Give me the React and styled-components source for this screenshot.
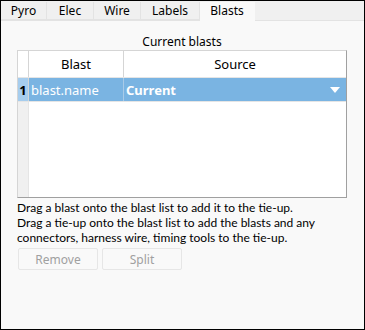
import styled, { createGlobalStyle } from "styled-components";

const GlobalStyle = createGlobalStyle`
  *, *::before, *::after {
    box-sizing: border-box;
  }
  html, body {
    margin: 0;
    padding: 0;
    background: #ffffff;
  }
  body {
    font-family: "Noto Sans", "Open Sans", sans-serif;
    font-size: 11.5px;
  }
`;

const tabs = [
  { label: "Pyro", width: 46 },
  { label: "Elec", width: 47 },
  { label: "Wire", width: 47 },
  { label: "Labels", width: 59 },
  { label: "Blasts", width: 55, active: true },
];

const helpLines = [
  "Drag a blast onto the blast list to add it to the tie-up.",
  "Drag a tie-up onto the blast list to add the blasts and any",
  "connectors, harness wire, timing tools to the tie-up.",
];

const App = () => {
  return (
    <>
      <GlobalStyle />
      <Frame>
        <TabStrip>
          {tabs.map((t) => (
            <Tab key={t.label} $active={t.active} $width={t.width}>
              {t.label}
            </Tab>
          ))}
        </TabStrip>
        <Pane>
          <Caption>Current blasts</Caption>
          <Grid>
            <HeaderRow>
              <Corner />
              <HeadCell $width={95}>Blast</HeadCell>
              <HeadCell $grow>Source</HeadCell>
            </HeaderRow>
            <Row>
              <RowNumber>1</RowNumber>
              <Cell $width={95}>blast.name</Cell>
              <Cell $grow $bold>
                Current
                <Arrow viewBox="0 0 10 6">
                  <path d="M0 0 H10 L5 6 Z" fill="#ffffff" />
                </Arrow>
              </Cell>
            </Row>
            <Filler>
              <FillerGutter />
            </Filler>
          </Grid>
          <Help>
            {helpLines.map((line) => (
              <HelpLine key={line}>{line}</HelpLine>
            ))}
          </Help>
          <Buttons>
            <Button disabled>Remove</Button>
            <Button disabled>Split</Button>
          </Buttons>
        </Pane>
      </Frame>
    </>
  );
};

export default App;

const Frame = styled.div`
  width: 365px;
  height: 330px;
  border: 1px solid #000000;
  background: #f0f0f0;
  display: flex;
  flex-direction: column;
  color: #000000;
`;

const TabStrip = styled.div`
  display: flex;
  align-items: flex-end;
  height: 19px;
  background: #f0f0f0;
  position: relative;
  z-index: 1;
`;

const Tab = styled.div`
  width: ${(p) => p.$width}px;
  height: ${(p) => (p.$active ? "19px" : "18px")};
  margin-bottom: ${(p) => (p.$active ? "-1px" : "0")};
  background: ${(p) => (p.$active ? "#f9f9f9" : "#f0f0f0")};
  border-right: 1px solid ${(p) => (p.$active ? "transparent" : "#e3e3e3")};
  border-bottom: ${(p) => (p.$active ? "none" : "1px solid #e3e3e3")};
  display: flex;
  align-items: center;
  justify-content: center;
  font-size: 12px;
  color: #000000;
  padding-bottom: ${(p) => (p.$active ? "3px" : "0")};
`;

const Pane = styled.div`
  flex: 1;
  background: #f9f9f9;
  border-top: 1px solid #e3e3e3;
  padding: 13px 17px 0 16px;
  display: flex;
  flex-direction: column;
`;

const Caption = styled.div`
  text-align: center;
  font-size: 12px;
  line-height: 16px;
  height: 16px;
`;

const Grid = styled.div`
  height: 148px;
  border: 1px solid #a0a0a0;
  border-left-color: #d5d5d5;
  border-top-color: #d5d5d5;
  background: #ffffff;
  display: flex;
  flex-direction: column;
`;

const HeaderRow = styled.div`
  display: flex;
  height: 27px;
  border-bottom: 1px solid #e5e5e5;
`;

const Corner = styled.div`
  width: 11px;
  border-right: 1px solid #d5d5d5;
`;

const HeadCell = styled.div`
  ${(p) => (p.$grow ? "flex: 1;" : `width: ${p.$width}px;`)}
  border-right: ${(p) => (p.$grow ? "none" : "1px solid #d5d5d5")};
  display: flex;
  align-items: center;
  justify-content: center;
  font-size: 13px;
`;

const Row = styled.div`
  display: flex;
  height: 24px;
  background: #7ab4e2;
  border-bottom: 1px solid #e5e5e5;
`;

const RowNumber = styled.div`
  width: 11px;
  background: #a6cdee;
  border-right: 1px solid #d5d5d5;
  font-weight: 700;
  font-size: 13px;
  display: flex;
  align-items: center;
  justify-content: center;
`;

const Cell = styled.div`
  ${(p) => (p.$grow ? "flex: 1;" : `width: ${p.$width}px;`)}
  border-right: ${(p) => (p.$grow ? "none" : "1px solid #a9cbe8")};
  color: #ffffff;
  font-weight: ${(p) => (p.$bold ? 700 : 400)};
  font-size: 13px;
  display: flex;
  align-items: center;
  justify-content: space-between;
  padding: 0 3px 0 2px;
`;

const Arrow = styled.svg`
  width: 10px;
  height: 6px;
  margin-right: 3px;
`;

const Filler = styled.div`
  flex: 1;
  display: flex;
`;

const FillerGutter = styled.div`
  width: 11px;
  background: #f0f0f0;
  border-right: 1px solid #e5e5e5;
`;

const Help = styled.div`
  margin-top: 2px;
  display: flex;
  flex-direction: column;
`;

const HelpLine = styled.div`
  font-family: Lato, "Noto Sans", sans-serif;
  font-size: 12px;
  line-height: 15px;
  white-space: nowrap;
  color: #000000;
`;

const Buttons = styled.div`
  display: flex;
  gap: 4px;
  margin-top: 3px;
  padding-left: 1px;
`;

const Button = styled.button`
  width: 80px;
  height: 22px;
  border: 1px solid #e6e6e6;
  border-radius: 2px;
  background: #f9f9f9;
  color: #a0a0a0;
  font-family: "Noto Sans", "Open Sans", sans-serif;
  font-size: 12px;
  padding: 0;
`;
